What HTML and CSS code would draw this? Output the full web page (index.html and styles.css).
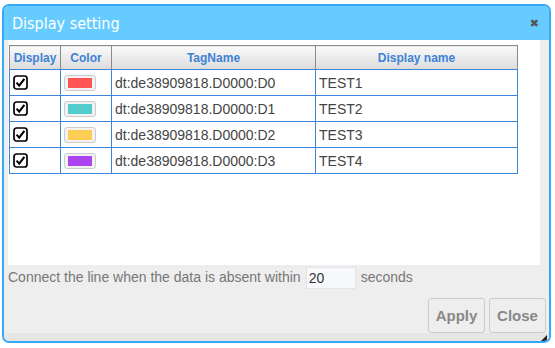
FILE: index.html
```html
<!DOCTYPE html>
<html lang="en">
<head>
  <meta charset="UTF-8">
  <title>Display setting</title>
  <link rel="stylesheet" href="styles.css">
</head>
<body>
  <div class="dialog">
    <div class="titlebar">
      <span class="title">Display setting</span>
      <span class="close-x">&#x2716;</span>
    </div>
    <div class="content">
      <div class="panel">
        <table class="grid">
          <thead>
            <tr>
              <th class="col-display">Display</th>
              <th class="col-color">Color</th>
              <th class="col-tag">TagName</th>
              <th class="col-name">Display name</th>
            </tr>
          </thead>
          <tbody id="rows"></tbody>
        </table>
      </div>
      <div class="gap-row">
        <span>Connect the line when the data is absent within</span>
        <input class="gap-input" type="text" value="20">
        <span>seconds</span>
      </div>
      <div class="buttons">
        <button class="btn">Apply</button>
        <button class="btn">Close</button>
      </div>
    </div>
    <div class="footer"><span class="grip"></span></div>
  </div>
  <script>
    const tags = [
      { color: '#ff5555', name: 'TEST1' },
      { color: '#55cccc', name: 'TEST2' },
      { color: '#ffcc55', name: 'TEST3' },
      { color: '#aa44ee', name: 'TEST4' }
    ];
    const check = '<svg class="check" width="15" height="15" viewBox="0 0 15 15">' +
      '<rect x="1" y="1" width="13" height="13" rx="2.5" fill="#fff" stroke="#000" stroke-width="1.7"/>' +
      '<path d="M3.6 7.6 L6.2 10.6 L11.4 3.8" fill="none" stroke="#000" stroke-width="2.1"/></svg>';
    const body = document.getElementById('rows');
    tags.forEach((t, i) => {
      const tr = document.createElement('tr');
      tr.innerHTML =
        '<td class="col-display">' + check + '</td>' +
        '<td class="col-color"><span class="swatch"><span class="swatch-fill" style="background:' + t.color + '"></span></span></td>' +
        '<td class="col-tag">dt:de38909818.D0000:D' + i + '</td>' +
        '<td class="col-name">' + t.name + '</td>';
      body.appendChild(tr);
    });
  </script>
</body>
</html>
```

FILE: styles.css
```css
* {
  box-sizing: border-box;
  margin: 0;
  padding: 0;
}
body {
  font-family: 'Liberation Sans', Arial, sans-serif;
  background: #fff;
  padding: 4px 5px 5px 2px;
}
.dialog {
  width: 549px;
  height: 339px;
  border: 2px solid #35a9f7;
  border-radius: 7px;
  background: #eeeeee;
  display: flex;
  flex-direction: column;
  overflow: hidden;
}
.titlebar {
  height: 34px;
  flex: none;
  background: #66ccff;
  display: flex;
  align-items: center;
  justify-content: space-between;
  padding: 0 10px 0 8px;
}
.title {
  color: #fff;
  font-family: 'DejaVu Sans Condensed', 'DejaVu Sans', sans-serif;
  font-size: 16px;
  padding-top: 1px;
}
.close-x {
  color: #555;
  font-size: 11px;
  font-family: 'DejaVu Sans', sans-serif;
}
.content {
  flex: 1;
  display: flex;
  flex-direction: column;
  padding: 0 3px 0 4px;
}
.panel {
  background: #fff;
  height: 225px;
  margin-right: 6px;
  padding: 5px 0 0 1px;
}
.grid {
  border-collapse: collapse;
  width: 509px;
  font-size: 14px;
  color: #444;
}
.grid th {
  height: 24px;
  font-size: 12px;
  font-weight: 700;
  color: #3d82d6;
  background: linear-gradient(#fafafa, #dcdcdc);
  border: 1px solid #8a8a8a;
  border-bottom: 1px solid #3d86da;
  text-align: center;
}
.grid td {
  height: 26px;
  border: 1px solid #3d86da;
  padding: 0 3px;
}
.grid td.col-name {
  border-left-color: #8fc0ee;
}
.col-display { width: 51px; }
.col-color { width: 51px; }
.col-tag { width: 204px; }
.grid td.col-display { padding: 0 0 0 3px; }
.check {
  display: block;
}
.swatch {
  display: block;
  width: 32px;
  height: 16px;
  border: 1px solid #ccc;
  border-radius: 3px;
  background: #f2f2f2;
  padding: 2px 3px;
}
.swatch-fill {
  display: block;
  height: 100%;
}
.gap-row {
  display: flex;
  align-items: center;
  gap: 5px;
  height: 24px;
  font-size: 14px;
  color: #777;
}
.gap-input {
  width: 50px;
  height: 22px;
  border: 1px solid #e4e4e4;
  background: #f8f9fc;
  font-family: 'Liberation Sans', Arial, sans-serif;
  font-size: 14px;
  color: #333;
  padding: 0 2px;
  margin-top: 1px;
}
.buttons {
  display: flex;
  justify-content: flex-end;
  gap: 4px;
  margin-top: 9px;
}
.btn {
  height: 35px;
  padding: 0 6px;
  min-width: 57px;
  font-family: 'Liberation Sans', Arial, sans-serif;
  font-size: 15px;
  font-weight: 700;
  color: #888;
  background: #eeeeee;
  border: 1px solid #ccc;
  border-radius: 3px;
}
.footer {
  height: 10px;
  flex: none;
  background: #e6e6e6;
  display: flex;
  justify-content: flex-end;
  align-items: flex-end;
  padding: 0 2px 2px 0;
}
.grip {
  width: 0;
  height: 0;
  border-left: 6px solid transparent;
  border-bottom: 6px solid #222;
}
```
